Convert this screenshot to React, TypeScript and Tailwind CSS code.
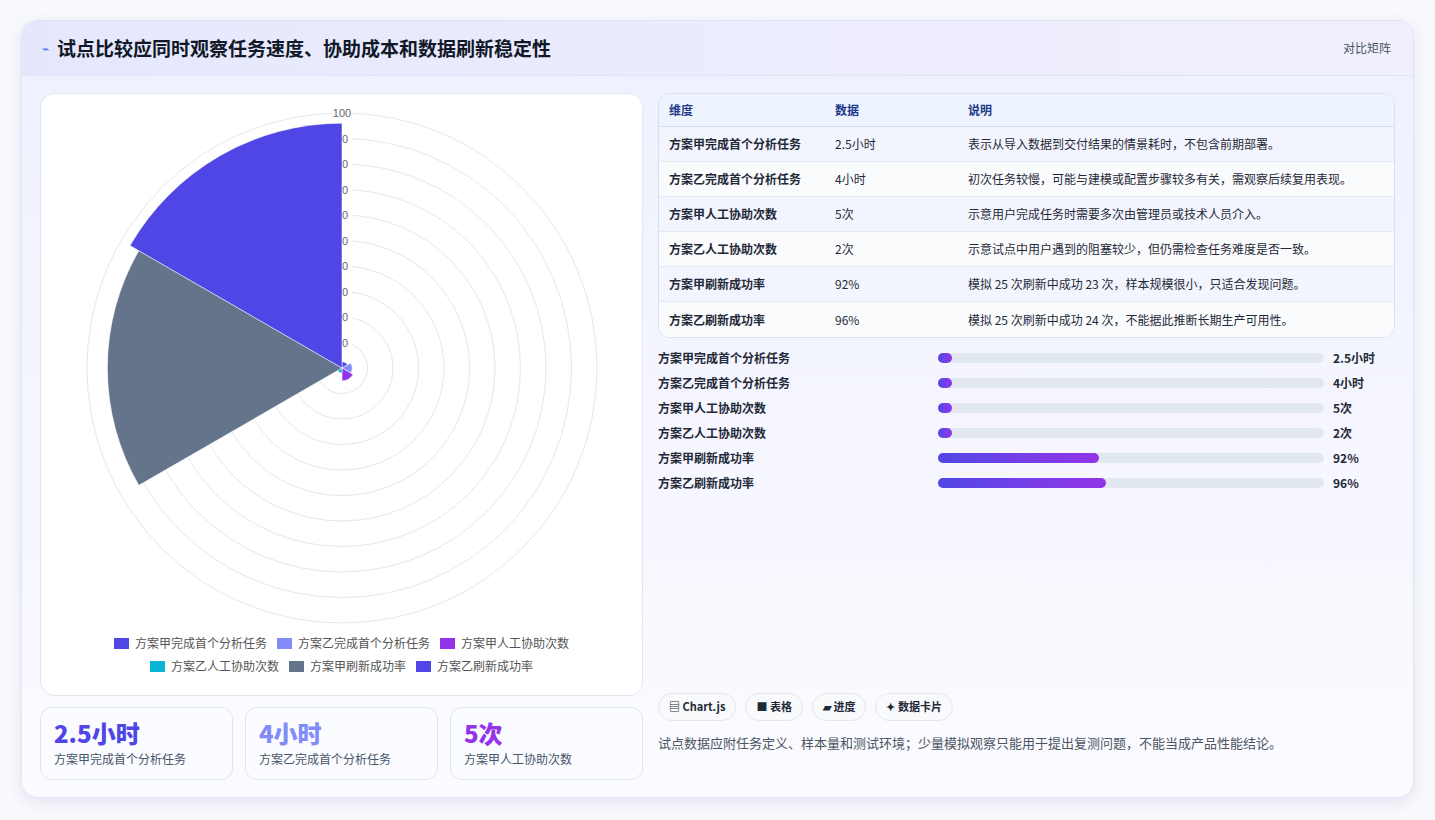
import React from "react";

const F = { fontFamily: '"Noto Sans CJK SC", "Noto Sans", sans-serif' };

const rows = [
  ["方案甲完成首个分析任务", "2.5小时", "表示从导入数据到交付结果的情景耗时，不包含前期部署。"],
  ["方案乙完成首个分析任务", "4小时", "初次任务较慢，可能与建模或配置步骤较多有关，需观察后续复用表现。"],
  ["方案甲人工协助次数", "5次", "示意用户完成任务时需要多次由管理员或技术人员介入。"],
  ["方案乙人工协助次数", "2次", "示意试点中用户遇到的阻塞较少，但仍需检查任务难度是否一致。"],
  ["方案甲刷新成功率", "92%", "模拟 25 次刷新中成功 23 次，样本规模很小，只适合发现问题。"],
  ["方案乙刷新成功率", "96%", "模拟 25 次刷新中成功 24 次，不能据此推断长期生产可用性。"],
];
const bars = [
  ["方案甲完成首个分析任务", "2.5小时", 14],
  ["方案乙完成首个分析任务", "4小时", 14],
  ["方案甲人工协助次数", "5次", 14],
  ["方案乙人工协助次数", "2次", 14],
  ["方案甲刷新成功率", "92%", 161],
  ["方案乙刷新成功率", "96%", 168],
] as const;
const data = [2.5, 4, 5, 2, 92, 96];
const colors = ["#4f46e5", "#818cf8", "#9333ea", "#06b6d4", "#64748b", "#4f46e5"];
const legend = [
  ["方案甲完成首个分析任务", "#4f46e5"],
  ["方案乙完成首个分析任务", "#818cf8"],
  ["方案甲人工协助次数", "#9333ea"],
  ["方案乙人工协助次数", "#06b6d4"],
  ["方案甲刷新成功率", "#64748b"],
  ["方案乙刷新成功率", "#4f46e5"],
];

function Polar() {
  const cx = 301, cy = 274, R = 255;
  const pt = (r: number, a: number) => [cx + r * Math.sin(a), cy - r * Math.cos(a)];
  return (
    <svg width="602" height="530" className="block">
      {Array.from({ length: 10 }).map((_, i) => (
        <circle key={i} cx={cx} cy={cy} r={(R * (i + 1)) / 10} fill="none" stroke="#e5e7eb" strokeWidth="1" />
      ))}
      {Array.from({ length: 10 }).map((_, i) => {
        const y = cy - (R * (i + 1)) / 10;
        return (
          <g key={i}>
            <rect x={cx - 10} y={y - 6} width={20} height={12} fill="#fff" />
            <text x={cx} y={y + 4} textAnchor="middle" fontSize="11" fill="#666" fontFamily="Liberation Sans, sans-serif">{(i + 1) * 10}</text>
          </g>
        );
      })}
      {data.map((v, i) => {
        const r = (R * v) / 100;
        const a0 = (i * Math.PI) / 3, a1 = ((i + 1) * Math.PI) / 3;
        const [x0, y0] = pt(r, a0);
        const [x1, y1] = pt(r, a1);
        return <path key={i} d={`M${cx},${cy} L${x0},${y0} A${r},${r} 0 0 1 ${x1},${y1} Z`} fill={colors[i]} stroke="#fff" strokeWidth="0.5" />;
      })}
    </svg>
  );
}

export default function App() {
  return (
    <div style={F} className="w-[1435px] h-[820px] bg-[#f8f9fc] pt-[20px] pl-[21px]">
      <div className="w-[1393px] h-[778px] rounded-[16px] border border-[#dfe3f5] bg-gradient-to-b from-[#eef0fe] to-[#fbfbff] shadow-[0_4px_14px_rgba(80,80,160,0.12)] overflow-hidden">
        <div className="h-[55px] flex items-center justify-between px-[20px] bg-gradient-to-r from-[#e5e8fd] to-[#f1effd] border-b border-[#e2e5f6]">
          <div className="flex items-center gap-[8px]">
            <span className="text-[#4f6ae5] text-[12px]">⌁</span>
            <span className="text-[19px] font-bold text-[#111827]">试点比较应同时观察任务速度、协助成本和数据刷新稳定性</span>
          </div>
          <span className="text-[12px] text-[#4b5563] mr-[2px]">对比矩阵</span>
        </div>
        <div className="flex px-[18px] pt-[17px] gap-[15px]">
          <div className="w-[603px] flex flex-col">
            <div className="h-[603px] rounded-[14px] border border-[#e3e7f2] bg-white flex flex-col items-center">
              <div className="pt-[0px]"><Polar /></div>
              <div className="flex flex-col items-center gap-[5px] mt-[10px]">
                <div className="flex gap-[10px]">
                  {legend.slice(0, 3).map(([t, c]) => (
                    <div key={t} className="flex items-center gap-[6px] text-[12px] text-[#555]"><span className="w-[15px] h-[11px]" style={{ background: c }} />{t}</div>
                  ))}
                </div>
                <div className="flex gap-[10px]">
                  {legend.slice(3).map(([t, c]) => (
                    <div key={t} className="flex items-center gap-[6px] text-[12px] text-[#555]"><span className="w-[15px] h-[11px]" style={{ background: c }} />{t}</div>
                  ))}
                </div>
              </div>
            </div>
            <div className="flex gap-[12px] mt-[11px]">
              {[["2.5小时", "text-[#4f46e5]", "方案甲完成首个分析任务"], ["4小时", "text-[#818cf8]", "方案乙完成首个分析任务"], ["5次", "text-[#9333ea]", "方案甲人工协助次数"]].map(([v, c, l]) => (
                <div key={v} className="flex-1 h-[73px] rounded-[12px] border border-[#dde6f5] bg-[#fafcff] px-[13px] pt-[9px]">
                  <div className={`text-[24px] font-extrabold leading-[32px] ${c}`}>{v}</div>
                  <div className="text-[12px] text-[#475569] mt-[1px]">{l}</div>
                </div>
              ))}
            </div>
          </div>
          <div className="w-[739px] flex flex-col">
            <div className="rounded-[12px] border border-[#d8e0f0] overflow-hidden bg-white">
              <div className="flex h-[33px] items-center bg-[#eef4fe] border-b border-[#d6def0] text-[12px] font-bold text-[#1e3a8a]">
                <div className="w-[176px] pl-[10px]">维度</div><div className="w-[133px]">数据</div><div>说明</div>
              </div>
              {rows.map((r, i) => (
                <div key={i} className={`flex h-[35px] items-center text-[12px] text-[#1f2937] ${i % 2 === 0 ? "bg-[#f3f5fe]" : "bg-[#fafbfd]"} ${i < 5 ? "border-b border-[#e5e9f2]" : ""}`}>
                  <div className="w-[176px] pl-[10px] font-semibold">{r[0]}</div>
                  <div className="w-[133px]">{r[1]}</div>
                  <div>{r[2]}</div>
                </div>
              ))}
            </div>
            <div className="flex flex-col gap-[9px] mt-[12px]">
              {bars.map(([l, v, w]) => (
                <div key={l} className="flex items-center h-[16px] text-[12px] text-[#1f2937]">
                  <div className="w-[280px] font-semibold">{l}</div>
                  <div className="w-[386px] h-[10px] rounded-full bg-[#e2e8f0]">
                    <div className="h-[10px] rounded-full bg-gradient-to-r from-[#4f46e5] to-[#9333ea]" style={{ width: w }} />
                  </div>
                  <div className="ml-[9px] font-bold">{v}</div>
                </div>
              ))}
            </div>
            <div className="flex-1" />
            <div className="flex gap-[9px]">
              {["▤ Chart.js", "■ 表格", "▰ 进度", "✦ 数据卡片"].map((t) => (
                <span key={t} className="h-[28px] px-[10px] rounded-full border border-[#e2e8f0] bg-[#f8fafc] text-[11px] font-bold text-[#1f2937] flex items-center">{t}</span>
              ))}
            </div>
            <div className="text-[13px] text-[#4b5563] mt-[12px] mb-[28px]">试点数据应附任务定义、样本量和测试环境；少量模拟观察只能用于提出复测问题，不能当成产品性能结论。</div>
          </div>
        </div>
      </div>
    </div>
  );
}
